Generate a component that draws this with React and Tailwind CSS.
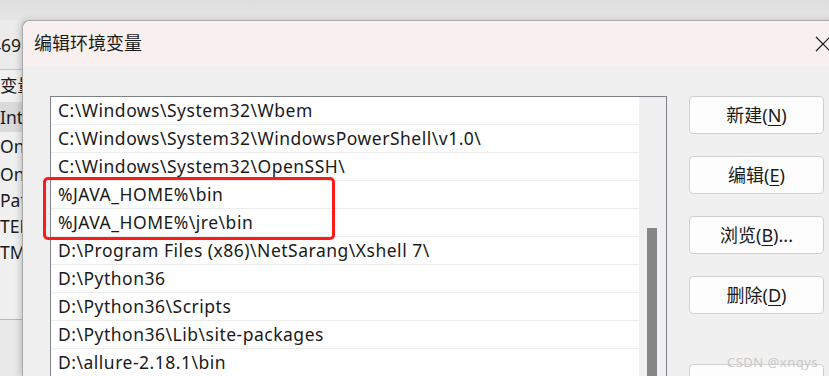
import React from "react";

const paths = [
  "C:\\Windows\\System32\\Wbem",
  "C:\\Windows\\System32\\WindowsPowerShell\\v1.0\\",
  "C:\\Windows\\System32\\OpenSSH\\",
  "%JAVA_HOME%\\bin",
  "%JAVA_HOME%\\jre\\bin",
  "D:\\Program Files (x86)\\NetSarang\\Xshell 7\\",
  "D:\\Python36",
  "D:\\Python36\\Scripts",
  "D:\\Python36\\Lib\\site-packages",
  "D:\\allure-2.18.1\\bin",
];

const buttons = [
  { label: "新建(", key: "N", tail: ")" },
  { label: "编辑(", key: "E", tail: ")" },
  { label: "浏览(", key: "B", tail: ")..." },
  { label: "删除(", key: "D", tail: ")" },
];

const font = {
  fontFamily: '"Noto Sans", "Noto Sans CJK SC", sans-serif',
};

export default function App() {
  return (
    <div
      className="w-[829px] h-[376px] overflow-hidden bg-[#e4e4e4] flex flex-col text-[#1a1a1a]"
      style={font}
    >
      {/* window behind */}
      <div className="h-[20px] shrink-0 bg-gradient-to-b from-[#dedede] to-[#e6e6e6]" />
      <div className="flex flex-1 min-h-0">
        <div className="w-[22px] shrink-0 overflow-hidden flex flex-col text-[17.5px] leading-none whitespace-nowrap">
          <div className="h-[50px] bg-[#ebebeb] border-b border-[#c4c4c4] flex items-center">
            <span className="ml-[-9px] pt-[2px]">469</span>
          </div>
          <div className="flex-1 bg-[#f0f0f0] flex flex-col">
            <div className="h-[33px] shrink-0 flex items-center border-b border-[#dcdcdc]">变量</div>
            <div className="h-[29px] shrink-0 flex items-center bg-[#dadada]">IntelliJ</div>
            <div className="h-[29px] shrink-0 flex items-center">OneDrive</div>
            <div className="h-[27px] shrink-0 flex items-center">OneDriveConsumer</div>
            <div className="h-[26px] shrink-0 flex items-center">Path</div>
            <div className="h-[26px] shrink-0 flex items-center">TEMP</div>
            <div className="h-[26px] shrink-0 flex items-center">TMP</div>
            <div className="h-[54px] shrink-0 border-b border-[#b9b9b9]" />
            <div className="flex-1 bg-[#e9e9e9]" />
          </div>
        </div>

        {/* dialog */}
        <div className="w-[820px] shrink-0 flex flex-col rounded-tl-[8px] border-l border-t border-[#a8a8a8] bg-[#f0f0f0] shadow-[-2px_0_6px_rgba(0,0,0,0.18)] overflow-hidden">
          <div className="h-[45px] shrink-0 bg-[#f7f0ee] flex items-center justify-between">
            <span className="ml-[11px] text-[18px] text-[#1b1b1b]">编辑环境变量</span>
            <svg
              width="16"
              height="16"
              viewBox="0 0 16 16"
              className="mr-[11px]"
            >
              <path d="M1 1L15 15M15 1L1 15" stroke="#1a1a1a" strokeWidth="1.2" />
            </svg>
          </div>

          <div className="flex flex-1 pt-[30px] pl-[27px] relative">
            {/* list box */}
            <div className="relative w-[617px] shrink-0">
              <div className="h-[320px] border-t border-l border-r border-[#7f8189] bg-white flex overflow-hidden">
                <div className="flex-1">
                  {paths.map((p) => (
                    <div
                      key={p}
                      className="h-[28px] border-b border-[#ececec] flex items-center pl-[7px] text-[17.5px] tracking-[0.5px] whitespace-nowrap"
                    >
                      {p}
                    </div>
                  ))}
                </div>
                <div className="w-[27px] bg-[#f0f0f0] pt-[131px] pl-[8px]">
                  <div className="w-[10px] h-[200px] bg-[#868686]" />
                </div>
              </div>
              <div className="absolute left-[-7px] top-[81px] w-[292px] h-[63px] border-[3px] border-[#ff1a1a] rounded-[5px]" />
            </div>

            {/* buttons */}
            <div className="ml-[22px] flex flex-col">
              {buttons.map((b) => (
                <button
                  key={b.key}
                  className="w-[135px] h-[38px] mb-[22px] rounded-[4px] border border-[#d0d0d0] bg-[#fdfdfd] text-[18px] flex items-center justify-center"
                >
                  {b.label}
                  <span className="underline underline-offset-[3px]">{b.key}</span>
                  {b.tail}
                </button>
              ))}
              <div className="w-[135px] h-[38px] mt-[28px] rounded-[4px] border border-[#d0d0d0] bg-[#fdfdfd]" />
            </div>

            <span className="absolute left-[704px] top-[287px] text-[13px] text-[#c9c9c9] tracking-[0.5px]">
              CSDN @xnqys
            </span>
          </div>
        </div>
      </div>
    </div>
  );
}
